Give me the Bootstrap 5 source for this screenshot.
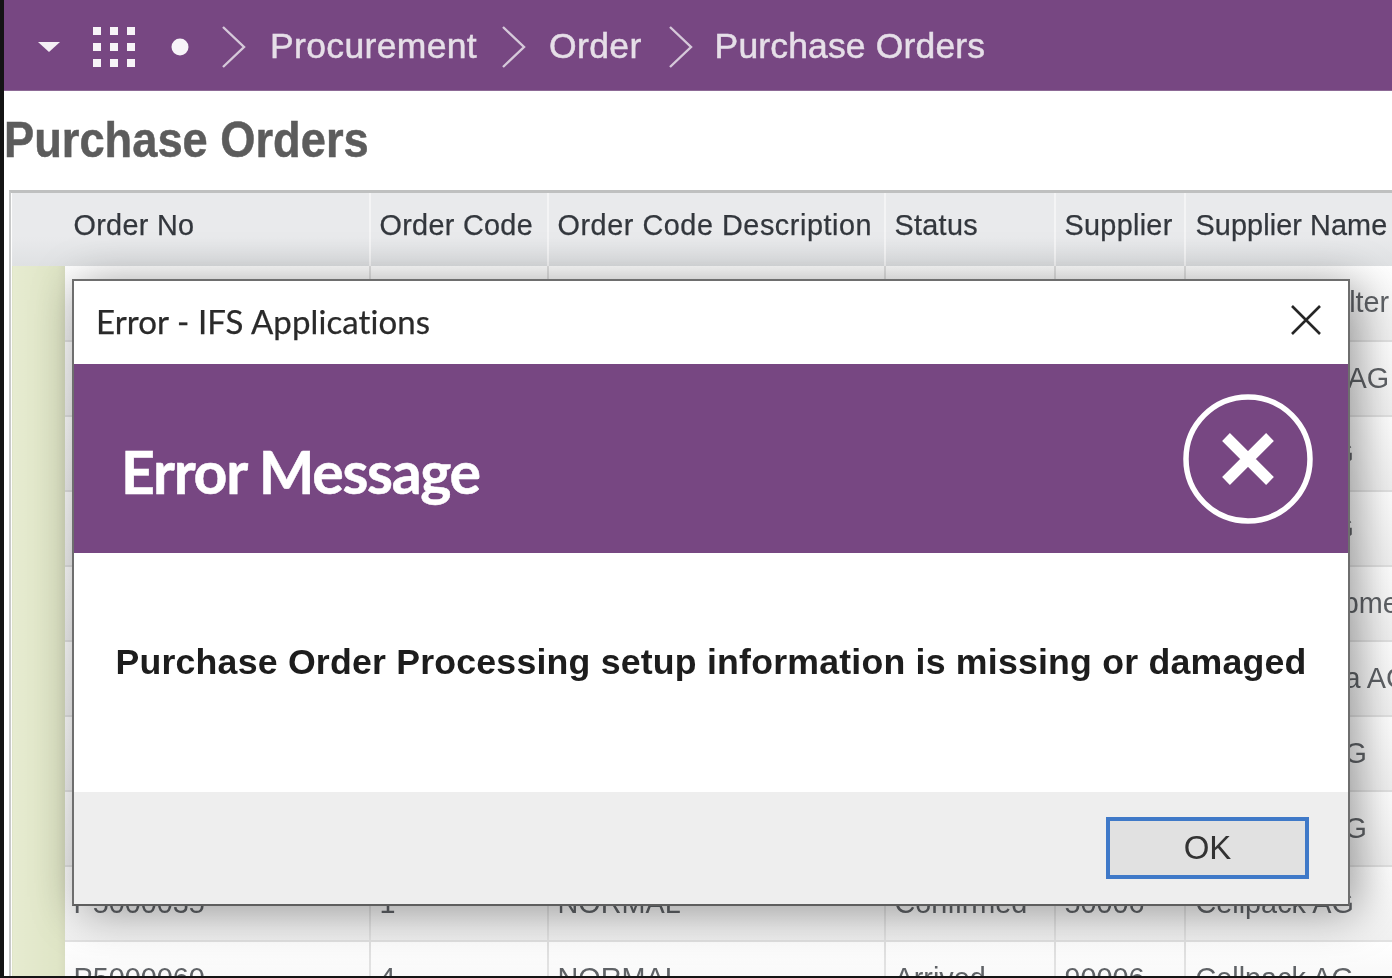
<!DOCTYPE html>
<html lang="en">
<head>
<meta charset="utf-8">
<title>Purchase Orders</title>
<link href="https://cdn.jsdelivr.net/npm/bootstrap@5.3.0/dist/css/bootstrap.min.css" rel="stylesheet">
<style>
html,body{height:978px;overflow:hidden}
body{background:#141414;font-family:"Liberation Sans",Arial,sans-serif;padding:0 0 2px 4px}
.app-shell{position:relative;height:976px;background:#fff;overflow:hidden;filter:blur(.55px)}
.top-bar{height:91px;background:#774782;padding:3px 0 0 34px;flex-wrap:nowrap;justify-content:flex-start;border-bottom:1px solid #8d6a96}
.crumb-text{font-size:35.5px;color:#e6dfe8;line-height:1;letter-spacing:.35px;-webkit-text-stroke:.5px #e6dfe8}
.crumb-last{letter-spacing:.15px}
.crumb-grid{margin-left:30px}
.crumb-dot{margin-left:32px}
.crumb-first{margin:0 23px 0 31px}
.crumb-second{margin:0 22px 0 24px}
.crumb-third{margin:0 21px 0 26px}
.page-heading{font-size:50px;font-weight:700;color:#5c5c5c;line-height:1;margin:0;height:99px;padding:24px 0 0;transform:scaleX(.905);transform-origin:0 0;white-space:nowrap;-webkit-text-stroke:.5px #5c5c5c}
.grid-wrap{margin-left:5px;border-top:3px solid #bfc0c0;border-left:2px solid #c8c9c9;overflow:hidden;height:786px}
.po-grid{table-layout:fixed;width:1500px;margin:0;border-collapse:collapse}
.po-grid th,.po-grid td{font-size:28.8px;white-space:nowrap;overflow:hidden;vertical-align:middle;padding:0 0 0 9px;line-height:1.1;font-weight:400}
.po-grid thead th{height:73px;background:linear-gradient(#e9eaec 60%,#dfe1e3);color:#33373d;border:0;border-right:2px solid #f4f4f5;padding-bottom:8px;letter-spacing:.3px;-webkit-text-stroke:.25px #33373d}
.po-grid thead th.desc-col{letter-spacing:.55px}
.po-grid thead th.supplier-col{letter-spacing:.1px}
.po-grid tbody td{height:75px;color:#5f6266;background:linear-gradient(#fff,#f1f1f1);border:0;border-right:2px solid #e2e2e2;border-bottom:2px solid #e2e2e2}
.po-grid td.gutter-cell{background:linear-gradient(90deg,#e6ebd0,#dfe5c6 85%,#d8ddc0);border:0;border-left:1px solid #fff;padding:0}
.po-grid th.corner-cell{border-right:0}
.po-grid th.supplier-col,.po-grid td.supplier-col{padding-left:10px}
.dialog-box{position:absolute;left:68px;top:279px;width:1278px;height:627px;background:#fff;border:2px solid #6e6e6e;border-bottom-color:#5e5e5e;border-radius:0;box-shadow:8px 6px 44px rgba(0,0,0,.4);display:flex;flex-direction:column}
.dialog-title{height:83px;flex:none;padding:0 26px 6px 22px;border:0;border-radius:0}
.dialog-title span{font-family:Lato,"Liberation Sans",sans-serif;font-size:33px;letter-spacing:.1px;margin-top:4px;color:#2a2a2a;-webkit-text-stroke:.25px #2a2a2a}
.dialog-banner{height:189px;flex:none;background:#774782;padding:0 34px 0 47px}
.banner-text{font-family:Lato,"Liberation Sans",sans-serif;font-weight:700;color:#fff;font-size:59px;letter-spacing:-1.3px;line-height:1;margin:26px 0 0;-webkit-text-stroke:.5px #fff}
.dialog-msg{flex:1 1 auto;padding:0 0 20px;color:#1d1d1d;font-size:35.7px;font-weight:700;white-space:nowrap;letter-spacing:.2px}
.dialog-foot{height:112px;flex:none;background:#eeeeee;padding:0 39px 0 0;border:0;border-radius:0}
.ok-btn{width:203px;height:62px;background:#e1e1e1;border:4px solid #3f79c8;border-radius:0;font-size:33px;line-height:1;color:#333;padding:0 0 2px;margin:0}
.ok-btn:hover{background:#e1e1e1;border-color:#3f79c8;color:#333}
svg{display:block;flex:none}
</style>
</head>
<body>
<div class="app-shell">
  <nav class="navbar top-bar">
    <svg width="24" height="12" viewBox="0 0 24 12"><polygon points="0,1 22,1 11,11" fill="#f4eff5"/></svg>
    <svg width="46" height="42" viewBox="0 0 46 42" fill="#f7f4f8" class="crumb-grid"><rect x="1" y="1" width="8" height="8"/><rect x="18" y="1" width="8" height="8"/><rect x="35" y="1" width="8" height="8"/><rect x="1" y="17" width="8" height="8"/><rect x="18" y="17" width="8" height="8"/><rect x="35" y="17" width="8" height="8"/><rect x="1" y="33" width="8" height="8"/><rect x="18" y="33" width="8" height="8"/><rect x="35" y="33" width="8" height="8"/></svg>
    <svg width="20" height="20" viewBox="0 0 20 20" class="crumb-dot"><circle cx="10" cy="10" r="8.5" fill="#f7f4f8"/></svg>
    <svg width="26" height="44" viewBox="0 0 26 44" class="crumb-first"><path d="M2 2 L23 22 L2 42" fill="none" stroke="#d6c9da" stroke-width="2.4"/></svg>
    <span class="crumb-text">Procurement</span>
    <svg width="26" height="44" viewBox="0 0 26 44" class="crumb-second"><path d="M2 2 L23 22 L2 42" fill="none" stroke="#d6c9da" stroke-width="2.4"/></svg>
    <span class="crumb-text">Order</span>
    <svg width="26" height="44" viewBox="0 0 26 44" class="crumb-third"><path d="M2 2 L23 22 L2 42" fill="none" stroke="#d6c9da" stroke-width="2.4"/></svg>
    <span class="crumb-text crumb-last">Purchase Orders</span>
  </nav>
  <h1 class="page-heading">Purchase Orders</h1>
  <div class="grid-wrap">
    <table class="table po-grid">
      <colgroup><col style="width:53px"><col style="width:305px"><col style="width:178px"><col style="width:337px"><col style="width:170px"><col style="width:130px"><col style="width:327px"></colgroup>
      <thead><tr><th class="corner-cell"></th><th>Order No</th><th>Order Code</th><th class="desc-col">Order Code Description</th><th>Status</th><th>Supplier</th><th class="supplier-col">Supplier Name</th></tr></thead>
      <tbody>
        <tr><td class="gutter-cell" rowspan="10"></td><td>P5000026</td><td>1</td><td>NORMAL</td><td>Confirmed</td><td>50001</td><td class="supplier-col">Ahlstrand Filter</td></tr>
        <tr><td>P5000027</td><td>1</td><td>NORMAL</td><td>Confirmed</td><td>50002</td><td class="supplier-col">Kartonwerk AG</td></tr>
        <tr><td>P5000028</td><td>1</td><td>NORMAL</td><td>Confirmed</td><td>50006</td><td class="supplier-col">Cellpack AG</td></tr>
        <tr><td>P5000029</td><td>1</td><td>NORMAL</td><td>Confirmed</td><td>50006</td><td class="supplier-col">Cellpack AG</td></tr>
        <tr><td>P5000030</td><td>1</td><td>NORMAL</td><td>Confirmed</td><td>50003</td><td class="supplier-col">Power Equipment</td></tr>
        <tr><td>P5000031</td><td>1</td><td>NORMAL</td><td>Confirmed</td><td>50004</td><td class="supplier-col">Sonopharma AG</td></tr>
        <tr><td>P5000032</td><td>1</td><td>NORMAL</td><td>Confirmed</td><td>50005</td><td class="supplier-col">Papierhof AG</td></tr>
        <tr><td>P5000033</td><td>1</td><td>NORMAL</td><td>Confirmed</td><td>50005</td><td class="supplier-col">Papierhof AG</td></tr>
        <tr><td>P5000035</td><td>1</td><td>NORMAL</td><td>Confirmed</td><td>50006</td><td class="supplier-col">Cellpack AG</td></tr>
        <tr><td>P5000060</td><td>4</td><td>NORMAL</td><td>Arrived</td><td>90006</td><td class="supplier-col">Cellpack AG</td></tr>
      </tbody>
    </table>
  </div>
  <div class="modal-content dialog-box" role="dialog" aria-label="Error - IFS Applications">
    <div class="modal-header dialog-title">
      <span>Error - IFS Applications</span>
      <svg width="32" height="32" viewBox="0 0 32 32" class="ms-auto"><path d="M2 2 L30 30 M30 2 L2 30" stroke="#262626" stroke-width="2.6" fill="none"/></svg>
    </div>
    <div class="d-flex align-items-center justify-content-between dialog-banner">
      <h2 class="banner-text">Error Message</h2>
      <svg width="132" height="132" viewBox="0 0 132 132"><circle cx="66" cy="66" r="62" fill="none" stroke="#fff" stroke-width="5.5"/><path d="M44 44 L88 88 M88 44 L44 88" stroke="#fff" stroke-width="11" fill="none"/></svg>
    </div>
    <div class="d-flex align-items-center justify-content-center dialog-msg">Purchase Order Processing setup information is missing or damaged</div>
    <div class="modal-footer dialog-foot">
      <button type="button" class="btn ok-btn">OK</button>
    </div>
  </div>
</div>
<script src="https://cdn.jsdelivr.net/npm/bootstrap@5.3.0/dist/js/bootstrap.bundle.min.js"></script>
</body>
</html>
